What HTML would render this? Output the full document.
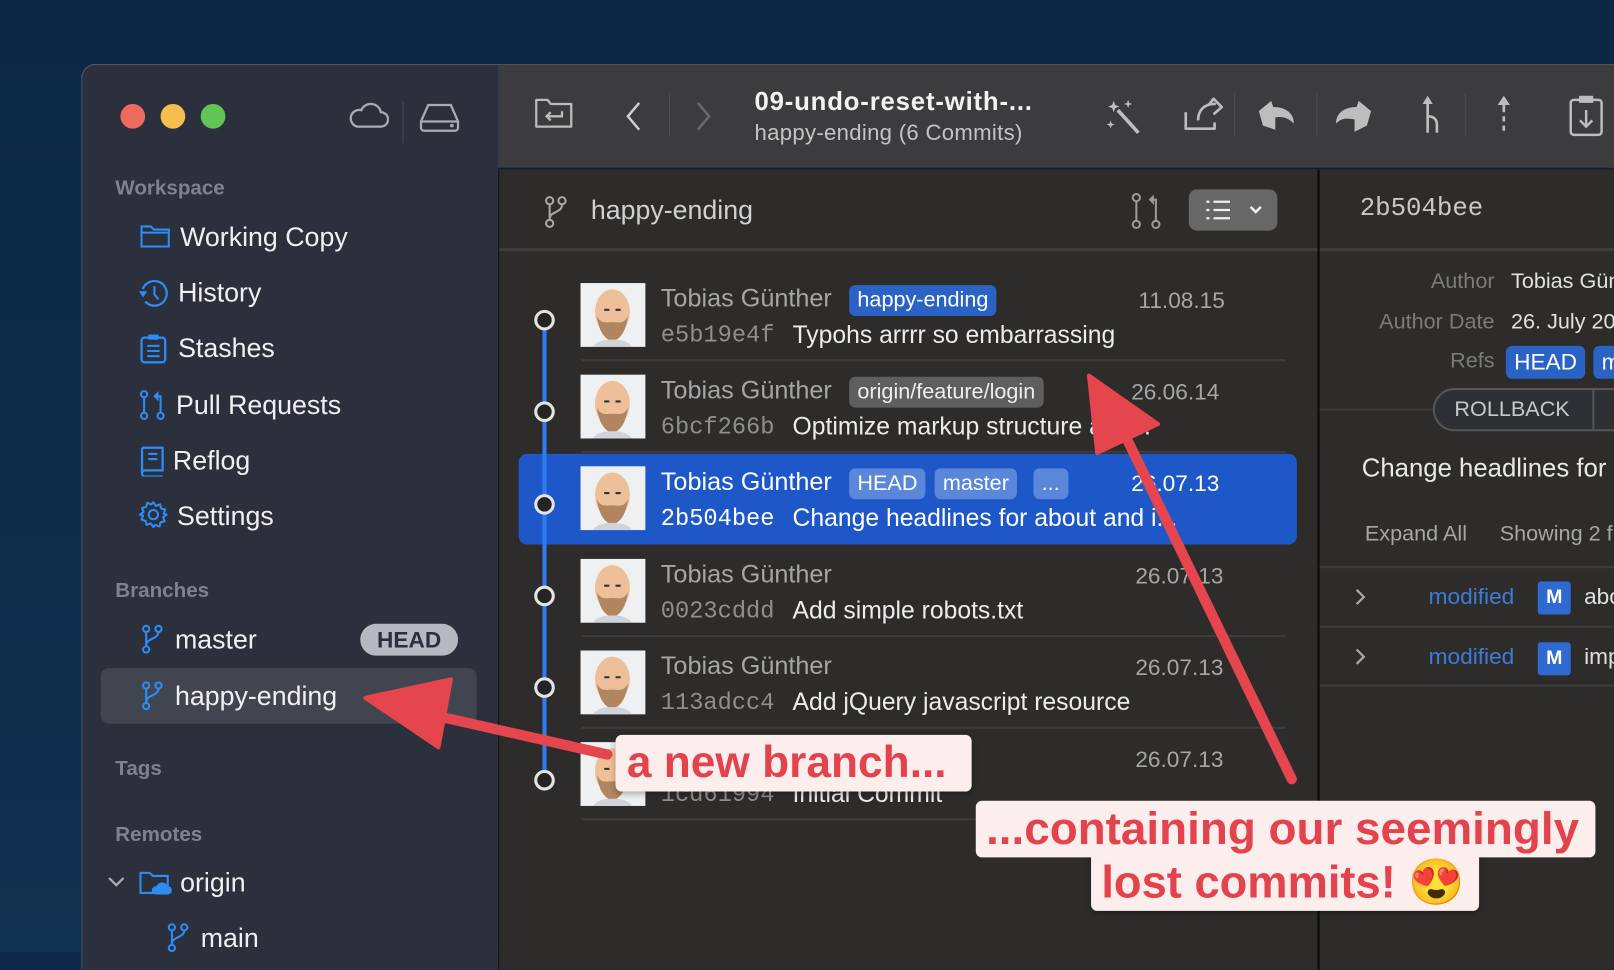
<!DOCTYPE html>
<html><head><meta charset="utf-8"><style>
*{margin:0;padding:0;box-sizing:border-box}
html,body{width:1614px;height:952px;overflow:hidden;background:#0d2a4a}
body{font-family:"Liberation Sans",sans-serif}
#s{position:absolute;left:0;top:0;width:1568px;height:925px;transform:scale(1.0293);transform-origin:0 0;background:linear-gradient(180deg,#0c2845,#10304f)}
.a{position:absolute;white-space:nowrap}
.win{position:absolute;left:79px;top:62px;width:1500px;height:880px;border-radius:14px 0 0 0;overflow:hidden;border:1px solid #5a5d66;border-right:none;border-bottom:none}
.side{position:absolute;left:0;top:0;width:404px;height:880px;background:#2c303d}
.tb{position:absolute;left:404px;top:0;width:1100px;height:101px;background:#3c3b3d;border-bottom:1px solid #151515}
.list{position:absolute;left:404px;top:102px;width:796px;height:800px;background:#2d2c2b;border-left:1px solid #111}
.det{position:absolute;left:1200px;top:102px;width:300px;height:800px;background:#2d2c2b;border-left:2px solid #0a0a0a}
.sh{color:#7d828e;font-size:20px;font-weight:bold}
.si{color:#f0f0f2;font-size:26px}
.dot{position:absolute;width:24px;height:24px;border-radius:50%}
.name{font-size:24.5px;color:#a6a6a6}
.hash{font-family:"Liberation Mono",monospace;font-size:23px;color:#8f8f8f}
.msg{font-size:24px;color:#ececec}
.date{font-size:22px;color:#a6a6a6}
.tag{position:absolute;height:30px;border-radius:6px;font-size:21px;color:#fff;padding:0 8px;line-height:30px}
.av{position:absolute;width:63px;height:62px;background:#eef0f2;overflow:hidden}
.sep{position:absolute;left:80px;width:684px;height:2px;background:#3e3d3c}
.circ{position:absolute;width:20px;height:20px;border-radius:50%;border:3px solid #e3e3e3;background:#242424}
.lbl{font-size:21px;color:#7b7b7b;text-align:right;width:160px}
.val{font-size:21px;color:#e0e0e0}
.note{position:absolute;background:#fdeeee;color:#e3434c;font-weight:bold;border-radius:6px;box-shadow:0 2px 6px rgba(0,0,0,.3);white-space:nowrap}
</style></head><body><div id="s">
<div class="win">
 <div class="side">
  <div class="dot" style="left:37px;top:38px;background:#ec6a5e"></div>
  <div class="dot" style="left:76px;top:38px;background:#f4bf4f"></div>
  <div class="dot" style="left:115px;top:38px;background:#61c454"></div>
  <svg class="a" style="left:258px;top:34px" width="40" height="30" viewBox="0 0 40 30"><path d="M9 26h23a7 7 0 0 0 0-14 10 10 0 0 0-19-2 7 7 0 0 0-4 16z" fill="none" stroke="#a9acb4" stroke-width="2.2"/></svg>
  <div class="a" style="left:311px;top:36px;width:1px;height:40px;background:#444854"></div>
  <svg class="a" style="left:326px;top:36px" width="42" height="30" viewBox="0 0 42 30"><path d="M3 19L10 3h22l7 16v6a3 3 0 0 1-3 3H6a3 3 0 0 1-3-3zM3 19h36" fill="none" stroke="#a9acb4" stroke-width="2.2"/><circle cx="33" cy="23" r="1.8" fill="#a9acb4"/></svg>
  <div class="a sh" style="left:32px;top:109px">Workspace</div>
  <svg class="a" style="left:56px;top:154px" width="30" height="24" viewBox="0 0 30 24"><path d="M1.5 3h9l3 3h14.5v16.5h-26.5zM1.5 9h26.5" fill="none" stroke="#2b8df5" stroke-width="2"/></svg>
  <div class="a si" style="left:95px;top:152px">Working Copy</div>
  <svg class="a" style="left:55px;top:207px" width="30" height="30" viewBox="0 0 30 30"><circle cx="15" cy="15" r="12" fill="none" stroke="#2b8df5" stroke-width="2.2" stroke-dasharray="62 20" transform="rotate(200 15 15)"/><path d="M15 8v8l4 5" fill="none" stroke="#2b8df5" stroke-width="2"/><path d="M0 13l4 6 4-6z" fill="#2b8df5"/></svg>
  <div class="a si" style="left:93px;top:206px">History</div>
  <svg class="a" style="left:56px;top:261px" width="26" height="30" viewBox="0 0 26 30"><rect x="1.5" y="4" width="23" height="24" rx="3" fill="none" stroke="#2b8df5" stroke-width="2.2"/><rect x="8" y="1" width="10" height="5" fill="#2b8df5"/><path d="M7 12h12M7 17h12M7 22h12" stroke="#2b8df5" stroke-width="2"/></svg>
  <div class="a si" style="left:93px;top:260px">Stashes</div>
  <svg class="a" style="left:56px;top:316px" width="26" height="30" viewBox="0 0 26 30"><circle cx="4" cy="4" r="3" fill="none" stroke="#2b8df5" stroke-width="2"/><circle cx="4" cy="25" r="3" fill="none" stroke="#2b8df5" stroke-width="2"/><circle cx="20" cy="25" r="3" fill="none" stroke="#2b8df5" stroke-width="2"/><path d="M4 7v15M20 22V6h-4" fill="none" stroke="#2b8df5" stroke-width="2"/><path d="M13 6l5-5v10z" fill="#2b8df5"/></svg>
  <div class="a si" style="left:91px;top:315px">Pull Requests</div>
  <svg class="a" style="left:56px;top:370px" width="24" height="30" viewBox="0 0 24 30"><path d="M2 2h20v22H5a3 3 0 0 0 0 6h17M2 2v25" fill="none" stroke="#2b8df5" stroke-width="2.2"/><path d="M8 8h9M8 13h9" stroke="#2b8df5" stroke-width="2"/></svg>
  <div class="a si" style="left:88px;top:369px">Reflog</div>
  <svg class="a" style="left:55px;top:423px" width="28" height="28" viewBox="0 0 28 28"><circle cx="14" cy="14" r="4.5" fill="none" stroke="#2b8df5" stroke-width="2"/><path d="M14 2l2.5 3.5 4-1.5 1 4 4 1-1.5 4L27 14l-3.5 2.5 1.5 4-4 1-1 4-4-1.5L14 26l-2.5-3.5-4 1.5-1-4-4-1 1.5-4L1 14l3.5-2.5-1.5-4 4-1 1-4 4 1.5z" fill="none" stroke="#2b8df5" stroke-width="2" stroke-linejoin="round"/></svg>
  <div class="a si" style="left:92px;top:423px">Settings</div>
  <div class="a sh" style="left:32px;top:500px">Branches</div>
  <svg class="a" style="left:57px;top:544px" width="22" height="28" viewBox="0 0 22 28"><circle cx="5" cy="4" r="3" fill="none" stroke="#2b8df5" stroke-width="2"/><circle cx="17" cy="4" r="3" fill="none" stroke="#2b8df5" stroke-width="2"/><circle cx="5" cy="24" r="3" fill="none" stroke="#2b8df5" stroke-width="2"/><path d="M5 7v14M17 7c0 7-12 6-12 13" fill="none" stroke="#2b8df5" stroke-width="2"/></svg>
  <div class="a si" style="left:90px;top:543px">master</div>
  <div class="a" style="left:270px;top:543px;width:95px;height:31px;border-radius:16px;background:#b6b9c0;color:#2c303d;font-weight:bold;font-size:22px;text-align:center;line-height:31px">HEAD</div>
  <div class="a" style="left:18px;top:586px;width:365px;height:54px;border-radius:8px;background:#41454f"></div>
  <svg class="a" style="left:57px;top:599px" width="22" height="28" viewBox="0 0 22 28"><circle cx="5" cy="4" r="3" fill="none" stroke="#2b8df5" stroke-width="2"/><circle cx="17" cy="4" r="3" fill="none" stroke="#2b8df5" stroke-width="2"/><circle cx="5" cy="24" r="3" fill="none" stroke="#2b8df5" stroke-width="2"/><path d="M5 7v14M17 7c0 7-12 6-12 13" fill="none" stroke="#2b8df5" stroke-width="2"/></svg>
  <div class="a si" style="left:90px;top:598px">happy-ending</div>
  <div class="a sh" style="left:32px;top:673px">Tags</div>
  <div class="a sh" style="left:32px;top:737px">Remotes</div>
  <svg class="a" style="left:24px;top:788px" width="18" height="12" viewBox="0 0 18 12"><path d="M2 2l7 7 7-7" fill="none" stroke="#a9acb4" stroke-width="2.2"/></svg>
  <svg class="a" style="left:55px;top:782px" width="32" height="26" viewBox="0 0 32 26"><path d="M1.5 3h9l3 3h14.5v16.5h-26.5z" fill="none" stroke="#2b8df5" stroke-width="2"/><path d="M16 24h12a4 4 0 0 0 0-8 6 6 0 0 0-11 0 4 4 0 0 0-1 8z" fill="#2b8df5"/></svg>
  <div class="a si" style="left:95px;top:779px">origin</div>
  <svg class="a" style="left:82px;top:834px" width="22" height="28" viewBox="0 0 22 28"><circle cx="5" cy="4" r="3" fill="none" stroke="#2b8df5" stroke-width="2"/><circle cx="17" cy="4" r="3" fill="none" stroke="#2b8df5" stroke-width="2"/><circle cx="5" cy="24" r="3" fill="none" stroke="#2b8df5" stroke-width="2"/><path d="M5 7v14M17 7c0 7-12 6-12 13" fill="none" stroke="#2b8df5" stroke-width="2"/></svg>
  <div class="a si" style="left:115px;top:833px">main</div>
 </div>
 <div class="tb">
  <svg class="a" style="left:35px;top:31px" width="38" height="32" viewBox="0 0 38 32"><path d="M2 3h11l3 4h20v22H2z" fill="none" stroke="#bcbcbc" stroke-width="2.2" stroke-linejoin="round"/><path d="M27 14v5H12M16 15l-4 4 4 4" fill="none" stroke="#bcbcbc" stroke-width="2.2"/></svg>
  <svg class="a" style="left:123px;top:35px" width="16" height="30" viewBox="0 0 16 30"><path d="M14 2L3 15l11 13" fill="none" stroke="#cfcfcf" stroke-width="2.4"/></svg>
  <div class="a" style="left:166px;top:28px;width:1px;height:42px;background:#4e4d50"></div>
  <svg class="a" style="left:192px;top:35px" width="16" height="30" viewBox="0 0 16 30"><path d="M2 2l11 13L2 28" fill="none" stroke="#6a6a6a" stroke-width="2.4"/></svg>
  <div class="a" style="left:249px;top:22px;font-size:25px;letter-spacing:0.8px;font-weight:bold;color:#f2f2f2">09-undo-reset-with-...</div>
  <div class="a" style="left:249px;top:54px;font-size:21.5px;letter-spacing:0.3px;color:#c4c4c4">happy-ending (6 Commits)</div>
  <svg class="a" style="left:588px;top:30px" width="40" height="40" viewBox="0 0 40 40"><path d="M14 14l20 22" stroke="#bdbdbd" stroke-width="3.5"/><path d="M10 5l1.5 4 4 1.5-4 1.5L10 16l-1.5-4-4-1.5 4-1.5zM24 4l1 3 3 1-3 1-1 3-1-3-3-1 3-1zM7 24l1 3 3 1-3 1-1 3-1-3-3-1 3-1z" fill="#bdbdbd"/></svg>
  <svg class="a" style="left:664px;top:30px" width="42" height="36" viewBox="0 0 42 36"><path d="M4 16v16h28v-6M16 24c0-10 6-16 16-16h-5l4-5 8 8-8 7" fill="none" stroke="#bdbdbd" stroke-width="2.6" stroke-linejoin="round"/></svg>
  <div class="a" style="left:715px;top:28px;width:1px;height:42px;background:#4e4d50"></div>
  <svg class="a" style="left:737px;top:33px" width="40" height="34" viewBox="0 0 40 34"><path d="M2 12L14 2l2 6c12 0 20 6 20 16-6-6-11-7-18-6v12L6 26z" fill="#bdbdbd"/></svg>
  <div class="a" style="left:795px;top:28px;width:1px;height:42px;background:#4e4d50"></div>
  <svg class="a" style="left:810px;top:33px" width="40" height="34" viewBox="0 0 40 34"><path d="M38 12L26 2l-2 6C12 8 4 14 4 24c6-6 11-5 18-4v12l12-6z" fill="#bdbdbd"/></svg>
  <svg class="a" style="left:897px;top:30px" width="20" height="40" viewBox="0 0 20 40"><path d="M6 0l5 8H1z" fill="#bdbdbd"/><path d="M6 6v30M6 20c6 0 9 3 9 8v8" fill="none" stroke="#bdbdbd" stroke-width="2.6"/></svg>
  <div class="a" style="left:939px;top:28px;width:1px;height:42px;background:#4e4d50"></div>
  <svg class="a" style="left:970px;top:30px" width="14" height="40" viewBox="0 0 14 40"><path d="M7 0l6 9H1z" fill="#bdbdbd"/><path d="M7 8v8M7 20v5M7 29v5" stroke="#bdbdbd" stroke-width="2.6"/></svg>
  <svg class="a" style="left:1040px;top:28px" width="36" height="42" viewBox="0 0 36 42"><rect x="2" y="6" width="30" height="34" rx="3" fill="none" stroke="#bdbdbd" stroke-width="2.4"/><rect x="10" y="2" width="14" height="7" rx="1" fill="#bdbdbd"/><path d="M17 16v16M11 26l6 6 6-6" fill="none" stroke="#bdbdbd" stroke-width="2.4"/></svg>
 </div>
 <div class="list">
  <svg class="a" style="left:43px;top:25px" width="24" height="32" viewBox="0 0 24 32"><circle cx="6" cy="5" r="3.5" fill="none" stroke="#a8a8a8" stroke-width="2"/><circle cx="18" cy="5" r="3.5" fill="none" stroke="#a8a8a8" stroke-width="2"/><circle cx="6" cy="27" r="3.5" fill="none" stroke="#a8a8a8" stroke-width="2"/><path d="M6 9v14M18 9c0 8-12 6-12 14" fill="none" stroke="#a8a8a8" stroke-width="2"/></svg>
  <div class="a" style="left:89px;top:24px;font-size:26px;color:#d0d0d0">happy-ending</div>
  <svg class="a" style="left:614px;top:22px" width="30" height="36" viewBox="0 0 30 36"><circle cx="5" cy="5" r="3.5" fill="none" stroke="#9a9a9a" stroke-width="2"/><circle cx="5" cy="31" r="3.5" fill="none" stroke="#9a9a9a" stroke-width="2"/><circle cx="24" cy="31" r="3.5" fill="none" stroke="#9a9a9a" stroke-width="2"/><path d="M5 9v18M24 27V7h-4" fill="none" stroke="#9a9a9a" stroke-width="2"/><path d="M17 7l5-5v10z" fill="#9a9a9a"/></svg>
  <div class="a" style="left:670px;top:19px;width:86px;height:40px;border-radius:8px;background:#676767"></div>
  <svg class="a" style="left:686px;top:29px" width="56" height="20" viewBox="0 0 56 20"><path d="M1 2h3M1 10h3M1 18h3M8 2h16M8 10h16M8 18h16" stroke="#f0f0f0" stroke-width="2.2"/><path d="M44 7l5 5 5-5" fill="none" stroke="#f0f0f0" stroke-width="2.4"/></svg>
  <div class="a" style="left:0;top:76px;width:796px;height:3px;background:#3e3d3c"></div>
  <div class="a" style="left:19px;top:276px;width:756px;height:88px;border-radius:8px;background:#1e57c8"></div>
  <div class="a" style="left:42px;top:144px;width:4px;height:450px;background:#2f7cf0"></div>
  <div class="circ" style="left:34px;top:136px"></div>
  <div class="circ" style="left:34px;top:225px"></div>
  <div class="circ" style="left:34px;top:315px"></div>
  <div class="circ" style="left:34px;top:404px"></div>
  <div class="circ" style="left:34px;top:493px"></div>
  <div class="circ" style="left:34px;top:583px"></div>
  <div class="av" style="left:79px;top:110px"><svg width="63" height="62" viewBox="0 0 63 62"><ellipse cx="31" cy="28" rx="17" ry="22" fill="#eec09a"/><path d="M16 32c2 18 10 24 15 24s13-6 15-24c-4 8-8 6-15 6s-11 2-15-6z" fill="#b08560"/><path d="M23 26h5M34 26h5" stroke="#333" stroke-width="2"/><path d="M12 62c4-6 12-7 19-7s15 1 19 7z" fill="#cfd4da"/></svg></div>
  <div class="a name" style="left:157px;top:112px">Tobias Günther</div>
  <div class="tag" style="left:340px;top:112px;background:#2b63c4">happy-ending</div>
  <div class="a date" style="left:621px;top:114px">11.08.15</div>
  <div class="a hash" style="left:157px;top:148px">e5b19e4f</div>
  <div class="a msg" style="left:285px;top:147px">Typohs arrrr so embarrassing</div>
  <div class="sep" style="top:184px"></div>
  <div class="av" style="left:79px;top:199px"><svg width="63" height="62" viewBox="0 0 63 62"><ellipse cx="31" cy="28" rx="17" ry="22" fill="#eec09a"/><path d="M16 32c2 18 10 24 15 24s13-6 15-24c-4 8-8 6-15 6s-11 2-15-6z" fill="#b08560"/><path d="M23 26h5M34 26h5" stroke="#333" stroke-width="2"/><path d="M12 62c4-6 12-7 19-7s15 1 19 7z" fill="#cfd4da"/></svg></div>
  <div class="a name" style="left:157px;top:201px">Tobias Günther</div>
  <div class="tag" style="left:340px;top:201px;background:#5e5e5e;color:#eee">origin/feature/login</div>
  <div class="a date" style="left:614px;top:203px">26.06.14</div>
  <div class="a hash" style="left:157px;top:237px">6bcf266b</div>
  <div class="a msg" style="left:285px;top:236px">Optimize markup structure and...</div>
  <div class="sep" style="top:273px"></div>
  <div class="av" style="left:79px;top:288px"><svg width="63" height="62" viewBox="0 0 63 62"><ellipse cx="31" cy="28" rx="17" ry="22" fill="#eec09a"/><path d="M16 32c2 18 10 24 15 24s13-6 15-24c-4 8-8 6-15 6s-11 2-15-6z" fill="#b08560"/><path d="M23 26h5M34 26h5" stroke="#333" stroke-width="2"/><path d="M12 62c4-6 12-7 19-7s15 1 19 7z" fill="#cfd4da"/></svg></div>
  <div class="a name" style="left:157px;top:290px;color:#fff">Tobias Günther</div>
  <div class="tag" style="left:340px;top:290px;background:#5a87d9">HEAD</div>
  <div class="tag" style="left:423px;top:290px;background:#5a87d9">master</div>
  <div class="tag" style="left:519px;top:290px;background:#5a87d9">...</div>
  <div class="a date" style="left:614px;top:292px;color:#fff">26.07.13</div>
  <div class="a hash" style="left:157px;top:326px;color:#fff">2b504bee</div>
  <div class="a msg" style="left:285px;top:325px;color:#fff">Change headlines for about and i...</div>
  <div class="av" style="left:79px;top:378px"><svg width="63" height="62" viewBox="0 0 63 62"><ellipse cx="31" cy="28" rx="17" ry="22" fill="#eec09a"/><path d="M16 32c2 18 10 24 15 24s13-6 15-24c-4 8-8 6-15 6s-11 2-15-6z" fill="#b08560"/><path d="M23 26h5M34 26h5" stroke="#333" stroke-width="2"/><path d="M12 62c4-6 12-7 19-7s15 1 19 7z" fill="#cfd4da"/></svg></div>
  <div class="a name" style="left:157px;top:380px">Tobias Günther</div>
  <div class="a date" style="left:618px;top:382px">26.07.13</div>
  <div class="a hash" style="left:157px;top:416px">0023cddd</div>
  <div class="a msg" style="left:285px;top:415px">Add simple robots.txt</div>
  <div class="sep" style="top:452px"></div>
  <div class="av" style="left:79px;top:467px"><svg width="63" height="62" viewBox="0 0 63 62"><ellipse cx="31" cy="28" rx="17" ry="22" fill="#eec09a"/><path d="M16 32c2 18 10 24 15 24s13-6 15-24c-4 8-8 6-15 6s-11 2-15-6z" fill="#b08560"/><path d="M23 26h5M34 26h5" stroke="#333" stroke-width="2"/><path d="M12 62c4-6 12-7 19-7s15 1 19 7z" fill="#cfd4da"/></svg></div>
  <div class="a name" style="left:157px;top:469px">Tobias Günther</div>
  <div class="a date" style="left:618px;top:471px">26.07.13</div>
  <div class="a hash" style="left:157px;top:505px">113adcc4</div>
  <div class="a msg" style="left:285px;top:504px">Add jQuery javascript resource</div>
  <div class="sep" style="top:541px"></div>
  <div class="av" style="left:79px;top:556px"><svg width="63" height="62" viewBox="0 0 63 62"><ellipse cx="31" cy="28" rx="17" ry="22" fill="#eec09a"/><path d="M16 32c2 18 10 24 15 24s13-6 15-24c-4 8-8 6-15 6s-11 2-15-6z" fill="#b08560"/><path d="M23 26h5M34 26h5" stroke="#333" stroke-width="2"/><path d="M12 62c4-6 12-7 19-7s15 1 19 7z" fill="#cfd4da"/></svg></div>
  <div class="a date" style="left:618px;top:560px">26.07.13</div>
  <div class="a hash" style="left:157px;top:594px">1cd61994</div>
  <div class="a msg" style="left:285px;top:593px">Initial Commit</div>
  <div class="sep" style="top:630px"></div>
 </div>
 <div class="det">
  <div class="a" style="left:39px;top:23px;font-family:'Liberation Mono',monospace;font-size:25px;color:#c8c8c8">2b504bee</div>
  <div class="a" style="left:0;top:76px;width:300px;height:3px;background:#3e3d3c"></div>
  <div class="a lbl" style="left:10px;top:97px">Author</div><div class="a val" style="left:186px;top:97px">Tobias Günther</div>
  <div class="a lbl" style="left:10px;top:136px">Author Date</div><div class="a val" style="left:186px;top:136px">26. July 2013</div>
  <div class="a lbl" style="left:10px;top:174px">Refs</div>
  <div class="tag" style="left:181px;top:171px;background:#2b63c4;height:32px;line-height:32px;font-size:22px">HEAD</div>
  <div class="tag" style="left:266px;top:171px;background:#2b63c4;height:32px;line-height:32px;font-size:22px">master</div>
  <div class="a" style="left:0;top:232px;width:120px;height:2px;background:#3e3d3c"></div>
  <div class="a" style="left:110px;top:212px;width:240px;height:42px;border-radius:21px;border:2px solid #555;background:#2e3034;color:#c8c8c8;font-size:21px;line-height:38px;padding-left:19px">ROLLBACK<span style="display:inline-block;width:2px;height:38px;background:#555;vertical-align:top;margin-left:22px"></span></div>
  <div class="a" style="left:41px;top:276px;font-size:25px;color:#e8e8e8">Change headlines for about and imprint</div>
  <div class="a" style="left:44px;top:342px;font-size:21px;color:#a6a6a6">Expand All</div>
  <div class="a" style="left:175px;top:342px;font-size:21px;color:#a6a6a6">Showing 2 files</div>
  <div class="a" style="left:0;top:385px;width:300px;height:2px;background:#3e3d3c"></div>
  <svg class="a" style="left:34px;top:464px" width="12" height="18" viewBox="0 0 12 18"><path d="M2 2l7 7-7 7" fill="none" stroke="#a8a8a8" stroke-width="2.2"/></svg>
  <div class="a" style="left:106px;top:460px;font-size:22px;color:#3d7bd9">modified</div>
  <div class="a" style="left:212px;top:459px;width:32px;height:32px;background:#2e6ad0;border-radius:3px;color:#fff;font-weight:bold;font-size:19px;text-align:center;line-height:32px">M</div>
  <div class="a" style="left:257px;top:460px;font-size:22px;color:#e0e0e0">imprint.html</div>
  <div class="a" style="left:0;top:443px;width:300px;height:2px;background:#3e3d3c"></div>
  <svg class="a" style="left:34px;top:406px" width="12" height="18" viewBox="0 0 12 18"><path d="M2 2l7 7-7 7" fill="none" stroke="#a8a8a8" stroke-width="2.2"/></svg>
  <div class="a" style="left:106px;top:402px;font-size:22px;color:#3d7bd9">modified</div>
  <div class="a" style="left:212px;top:400px;width:32px;height:32px;background:#2e6ad0;border-radius:3px;color:#fff;font-weight:bold;font-size:19px;text-align:center;line-height:32px">M</div>
  <div class="a" style="left:257px;top:402px;font-size:22px;color:#e0e0e0">about.html</div>
  <div class="a" style="left:0;top:500px;width:300px;height:2px;background:#3e3d3c"></div>
 </div>
</div>
<svg class="a" style="left:0;top:0" width="1568" height="925" viewBox="0 0 1568 925">
 <path d="M590 733L400 690" stroke="#e5454d" stroke-width="10" stroke-linecap="round"/>
 <path d="M355 678L438 660 426 726z" fill="#e5454d" stroke="#e5454d" stroke-width="4" stroke-linejoin="round"/>
 <path d="M1255 757L1082 400" stroke="#e5454d" stroke-width="10" stroke-linecap="round"/>
 <path d="M1058 365L1125 412 1066 440z" fill="#e5454d" stroke="#e5454d" stroke-width="4" stroke-linejoin="round"/>
</svg>
<div class="note" style="left:598px;top:714px;width:346px;height:55px;font-size:43px;line-height:55px;padding-left:11px">a new branch...</div>
<div class="note" style="left:1060px;top:828px;width:377px;height:57px;font-size:44px;line-height:60px;padding-left:10px">lost commits! 😍</div>
<div class="note" style="left:948px;top:778px;width:602px;height:55px;font-size:44.5px;line-height:55px;padding-left:10px;box-shadow:none">...containing our seemingly</div>
</div></body></html>
